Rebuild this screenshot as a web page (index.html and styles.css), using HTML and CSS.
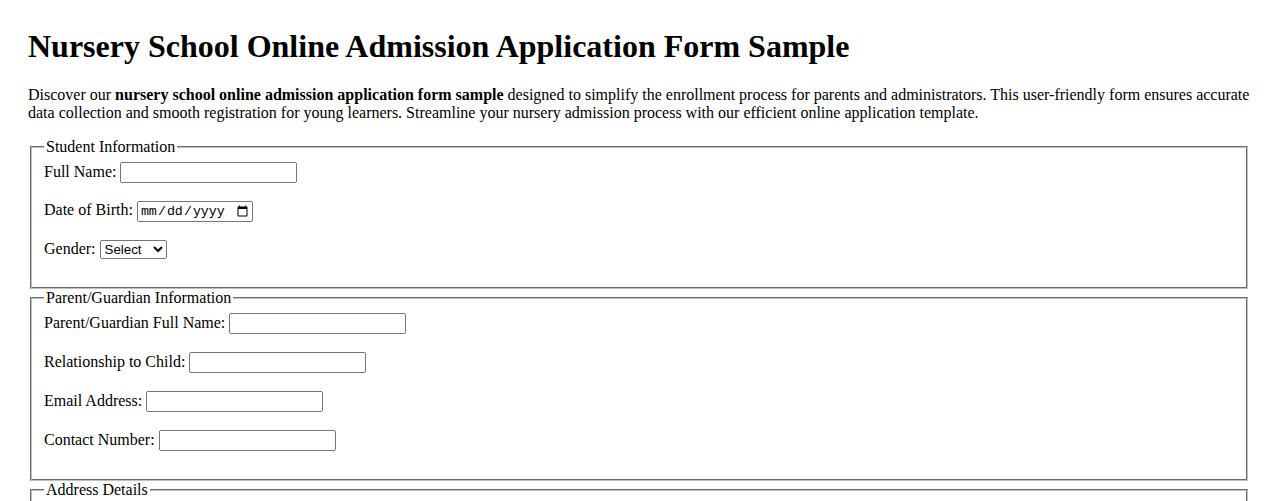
FILE: index.html
```html
<!DOCTYPE html>
<html lang="en">
<head>
<meta charset="utf-8">
<title>Nursery School Online Admission Application Form Sample</title>
<link rel="stylesheet" href="styles.css">
</head>
<body>
<h1 class="title">Nursery School Online Admission Application Form Sample</h1>
<p class="intro">Discover our <strong>nursery school online admission application form sample</strong> designed to simplify the enrollment process for parents and administrators. This user-friendly form ensures accurate data collection and smooth registration for young learners. Streamline your nursery admission process with our efficient online application template.</p>
<form class="form">
  <fieldset class="group">
    <legend class="group-title">Student Information</legend>
    <label for="sname">Full Name:</label>
    <input class="field text" type="text" id="sname" name="sname">
    <br><br>
    <label for="dob">Date of Birth:</label>
    <input class="field date" type="date" id="dob" name="dob">
    <br><br>
    <label for="gender">Gender:</label>
    <select class="field select" id="gender" name="gender">
      <option value="">Select</option>
      <option value="male">Male</option>
      <option value="female">Female</option>
    </select>
    <br><br>
  </fieldset>
  <fieldset class="group">
    <legend class="group-title">Parent/Guardian Information</legend>
    <label for="pname">Parent/Guardian Full Name:</label>
    <input class="field text" type="text" id="pname" name="pname">
    <br><br>
    <label for="rel">Relationship to Child:</label>
    <input class="field text" type="text" id="rel" name="rel">
    <br><br>
    <label for="email">Email Address:</label>
    <input class="field text" type="email" id="email" name="email">
    <br><br>
    <label for="phone">Contact Number:</label>
    <input class="field text" type="tel" id="phone" name="phone">
    <br><br>
  </fieldset>
  <fieldset class="group">
    <legend class="group-title">Address Details</legend>
    <label for="addr">Street Address:</label>
    <input class="field text" type="text" id="addr" name="addr">
    <br><br>
    <label for="city">City:</label>
    <input class="field text" type="text" id="city" name="city">
    <br><br>
  </fieldset>
</form>
</body>
</html>
```
FILE: styles.css
```css
body {
  margin: 8px;
  padding: 20px;
  font-family: "Liberation Serif", "Times New Roman", serif;
  font-size: 16px;
  color: #000;
  background: #fff;
}
.title {
  font-size: 32px;
  font-weight: bold;
  margin: 0 0 21px;
  line-height: normal;
}
.intro {
  margin: 0 0 16px;
  line-height: normal;
}
.form {
  margin: 0;
}
.group {
  margin: 0 2px;
  padding: 0.35em 0.75em 0.625em;
  border: 2px groove #c0c0c0;
}
.group-title {
  padding: 0 2px;
}
.field {
  font-family: "Liberation Sans", Arial, sans-serif;
  font-size: 13.333px;
}
.text {
  width: 169px;
}
.date {
  width: 111px;
  font-family: "Liberation Mono", "Courier New", monospace;
}
```
